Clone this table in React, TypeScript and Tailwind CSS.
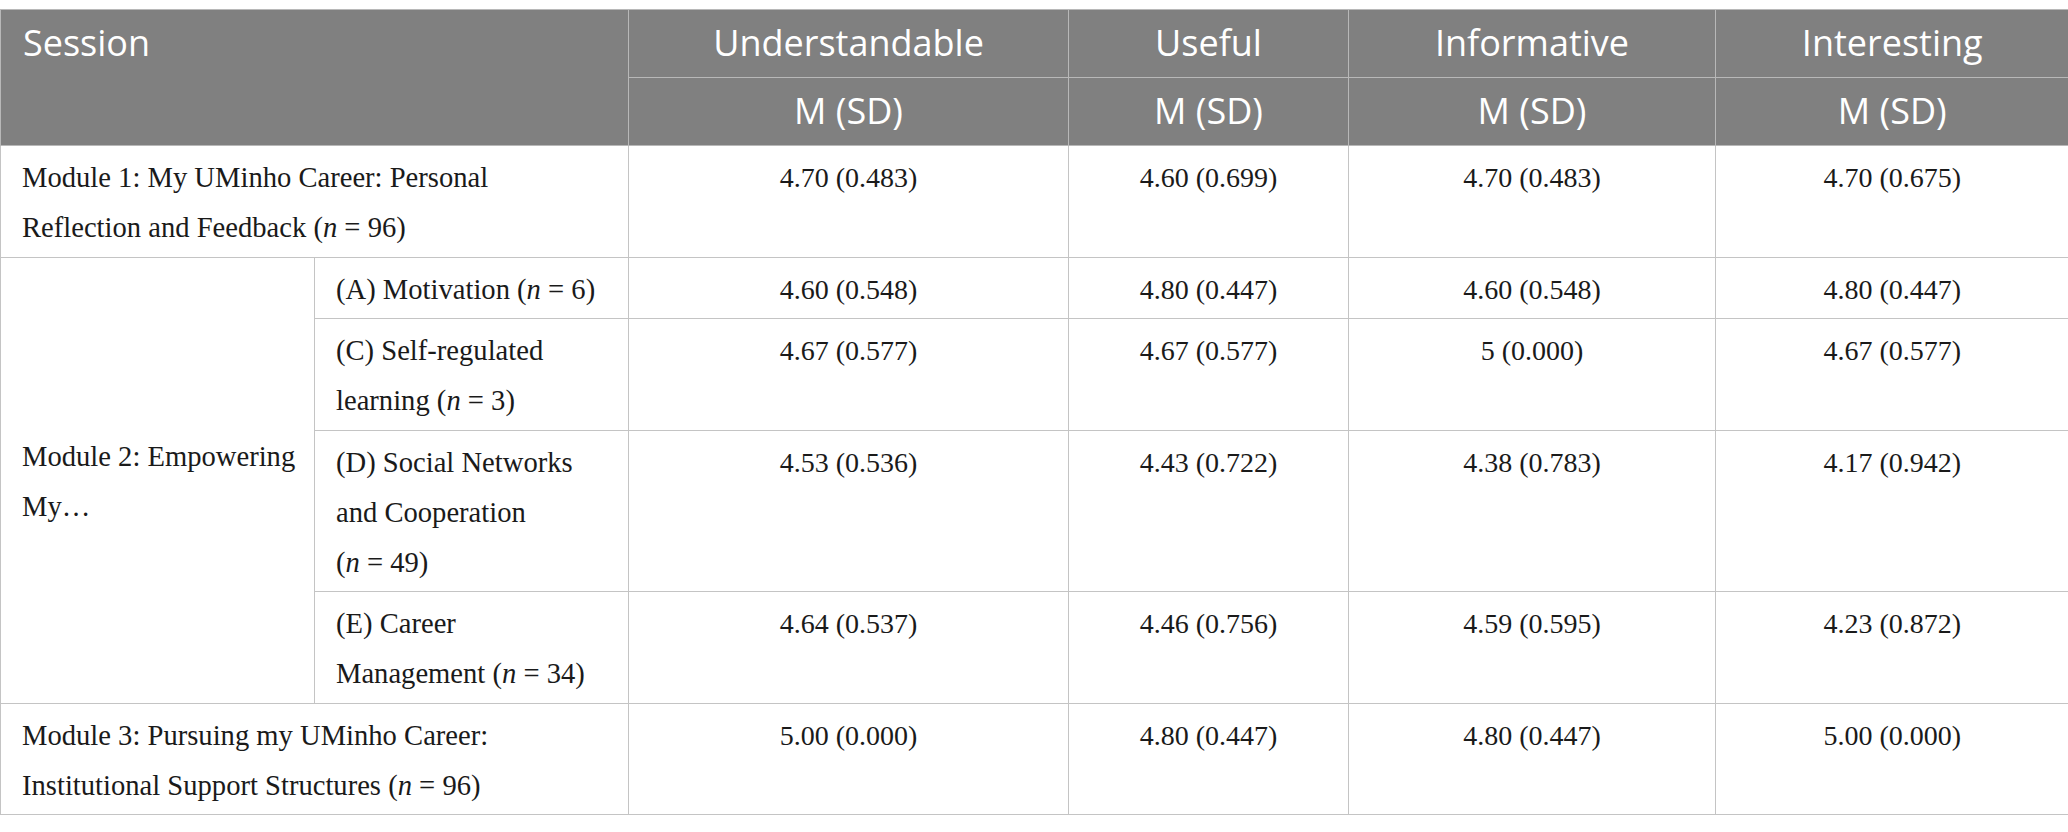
import React from "react";

const head = "border border-[#b8b8b8] bg-[#808080] text-white font-normal align-top pt-[8px] pb-[9px] leading-[50px] text-[36px]";
const cell = "border border-[#c4c4c4] align-top pt-[7px] pb-[3.5px] leading-[50px]";
const label = `${cell} px-[21px] text-left text-[28.6px] whitespace-nowrap`;
const num = `${cell} text-center text-[28px]`;

const N = ({ v }: { v: string }) => (
  <>
    (<i>n</i> = {v})
  </>
);

const values: string[][] = [
  ["4.70 (0.483)", "4.60 (0.699)", "4.70 (0.483)", "4.70 (0.675)"],
  ["4.60 (0.548)", "4.80 (0.447)", "4.60 (0.548)", "4.80 (0.447)"],
  ["4.67 (0.577)", "4.67 (0.577)", "5 (0.000)", "4.67 (0.577)"],
  ["4.53 (0.536)", "4.43 (0.722)", "4.38 (0.783)", "4.17 (0.942)"],
  ["4.64 (0.537)", "4.46 (0.756)", "4.59 (0.595)", "4.23 (0.872)"],
  ["5.00 (0.000)", "4.80 (0.447)", "4.80 (0.447)", "5.00 (0.000)"],
];

const Values = ({ row }: { row: string[] }) => (
  <>
    {row.map((v, i) => (
      <td key={i} className={`${num} ${i === 3 ? "border-r-0" : ""}`}>
        {v}
      </td>
    ))}
  </>
);

const columns = ["Understandable", "Useful", "Informative", "Interesting"];

export default function App() {
  return (
    <div className="w-[2068px] h-[832px] bg-white pt-[9px] overflow-hidden font-['Liberation_Serif',serif] text-[#1a1a1a]">
      <table className="w-[2068px] table-fixed border-collapse">
        <colgroup>
          <col className="w-[314px]" />
          <col className="w-[314px]" />
          <col className="w-[440px]" />
          <col className="w-[280px]" />
          <col className="w-[367px]" />
          <col className="w-[353px]" />
        </colgroup>
        <thead className="font-['Open_Sans',sans-serif]">
          <tr>
            <th colSpan={2} rowSpan={2} className={`${head} text-left px-[22px]`}>
              Session
            </th>
            {columns.map((c, i) => (
              <th key={c} className={`${head} text-center ${i === 3 ? "border-r-0" : ""}`}>
                {c}
              </th>
            ))}
          </tr>
          <tr>
            {columns.map((c, i) => (
              <th key={c} className={`${head} text-center ${i === 3 ? "border-r-0" : ""}`}>
                M (SD)
              </th>
            ))}
          </tr>
        </thead>
        <tbody>
          <tr>
            <td colSpan={2} className={label}>
              Module 1: My UMinho Career: Personal
              <br />
              Reflection and Feedback <N v="96" />
            </td>
            <Values row={values[0]} />
          </tr>
          <tr>
            <td rowSpan={4} className={`${label} !align-middle !pr-0`}>
              Module 2: Empowering
              <br />
              My…
            </td>
            <td className={label}>
              (A) Motivation <N v="6" />
            </td>
            <Values row={values[1]} />
          </tr>
          <tr>
            <td className={label}>
              (C) Self-regulated
              <br />
              learning <N v="3" />
            </td>
            <Values row={values[2]} />
          </tr>
          <tr>
            <td className={label}>
              (D) Social Networks
              <br />
              and Cooperation
              <br />
              <N v="49" />
            </td>
            <Values row={values[3]} />
          </tr>
          <tr>
            <td className={label}>
              (E) Career
              <br />
              Management <N v="34" />
            </td>
            <Values row={values[4]} />
          </tr>
          <tr>
            <td colSpan={2} className={label}>
              Module 3: Pursuing my UMinho Career:
              <br />
              Institutional Support Structures <N v="96" />
            </td>
            <Values row={values[5]} />
          </tr>
        </tbody>
      </table>
    </div>
  );
}
